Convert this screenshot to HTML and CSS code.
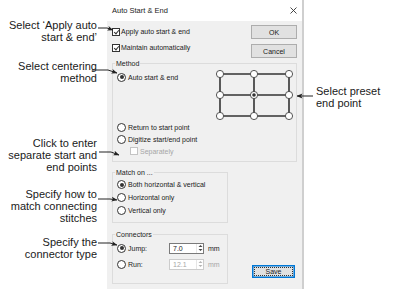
FILE: index.html
```html
<!DOCTYPE html>
<html lang="en">
<head>
    <meta charset="UTF-8">
    <meta name="viewport" content="width=device-width, initial-scale=1.0">
    <title>Auto Start &amp; End</title>
    <link rel="stylesheet" href="styles.css">
</head>
<body>
    <div class="figure">
        <div class="dialog">
            <div class="titlebar">
                <span class="title">Auto Start &amp; End</span>
                <svg class="close" width="7" height="7" viewBox="0 0 7 7">
                    <path d="M0.5 0.5 L6.5 6.5 M6.5 0.5 L0.5 6.5" stroke="#333" stroke-width="0.9"/>
                </svg>
            </div>

            <div class="body">
                <div class="top">
                    <div class="checks">
                        <div class="check"><span class="box checked"></span>Apply auto start &amp; end</div>
                        <div class="check"><span class="box checked"></span>Maintain automatically</div>
                    </div>
                    <div class="buttons">
                        <div class="btn">OK</div>
                        <div class="btn">Cancel</div>
                    </div>
                </div>

                <div class="group method">
                    <div class="group-title">Method</div>
                    <div class="method-top">
                        <div class="radio-row"><span class="radio on"></span>Auto start &amp; end</div>
                        <svg class="grid" width="80" height="52" viewBox="0 0 80 52">
                            <g stroke="#333" stroke-width="1.6">
                                <line x1="7" y1="5" x2="76" y2="5"/>
                                <line x1="7" y1="26" x2="76" y2="26"/>
                                <line x1="7" y1="47" x2="76" y2="47"/>
                                <line x1="7" y1="5" x2="7" y2="47"/>
                                <line x1="41" y1="5" x2="41" y2="47"/>
                                <line x1="76" y1="5" x2="76" y2="47"/>
                            </g>
                            <g fill="#fff" stroke="#444" stroke-width="0.9">
                                <circle cx="7" cy="5" r="3.6"/>
                                <circle cx="41" cy="5" r="3.6"/>
                                <circle cx="76" cy="5" r="3.6"/>
                                <circle cx="7" cy="26" r="3.6"/>
                                <circle cx="41" cy="26" r="3.6"/>
                                <circle cx="76" cy="26" r="3.6"/>
                                <circle cx="7" cy="47" r="3.6"/>
                                <circle cx="41" cy="47" r="3.6"/>
                                <circle cx="76" cy="47" r="3.6"/>
                            </g>
                            <circle cx="41" cy="26" r="1.8" fill="#333"/>
                        </svg>
                    </div>
                    <div class="radio-row"><span class="radio"></span>Return to start point</div>
                    <div class="radio-row"><span class="radio"></span>Digitize start/end point</div>
                    <div class="check sub disabled"><span class="box"></span>Separately</div>
                </div>

                <div class="bottom">
                    <div class="groups">
                        <div class="group match">
                            <div class="group-title">Match on ...</div>
                            <div class="match-rows">
                                <div class="radio-row tall"><span class="radio on"></span>Both horizontal &amp; vertical</div>
                                <div class="radio-row tall"><span class="radio"></span>Horizontal only</div>
                                <div class="radio-row tall"><span class="radio"></span>Vertical only</div>
                            </div>
                        </div>

                        <div class="group connectors">
                            <div class="group-title">Connectors</div>
                            <div class="conn-rows">
                                <div class="conn-row">
                                    <div class="radio-row conn-label"><span class="radio on"></span>Jump:</div>
                                    <div class="spin">
                                        <span class="spin-value">7.0</span>
                                        <span class="spin-arrows">
                                            <svg width="5" height="8" viewBox="0 0 5 8"><path d="M0.5 3 L2.5 1 L4.5 3 Z M0.5 5 L2.5 7 L4.5 5 Z" fill="#444"/></svg>
                                        </span>
                                    </div>
                                    <span class="unit">mm</span>
                                </div>
                                <div class="conn-row disabled">
                                    <div class="radio-row conn-label"><span class="radio"></span>Run:</div>
                                    <div class="spin">
                                        <span class="spin-value">12.1</span>
                                        <span class="spin-arrows">
                                            <svg width="5" height="8" viewBox="0 0 5 8"><path d="M0.5 3 L2.5 1 L4.5 3 Z M0.5 5 L2.5 7 L4.5 5 Z" fill="#b5b5b5"/></svg>
                                        </span>
                                    </div>
                                    <span class="unit">mm</span>
                                </div>
                            </div>
                        </div>
                    </div>
                    <div class="btn save">Save</div>
                </div>
            </div>
        </div>

        <!-- callouts -->
        <div class="callout left c-apply">Select ‘Apply auto<br>start &amp; end’</div>
        <div class="callout left c-method">Select centering<br>method</div>
        <div class="callout left c-click">Click to enter<br>separate start and<br>end points</div>
        <div class="callout left c-match">Specify how to<br>match connecting<br>stitches</div>
        <div class="callout left c-conn">Specify the<br>connector type</div>
        <div class="callout right c-preset">Select preset<br>end point</div>

        <svg class="leaders" width="399" height="289" viewBox="0 0 399 289">
            <defs>
                <marker id="ah" markerWidth="6" markerHeight="6" refX="5.5" refY="3" orient="auto" markerUnits="userSpaceOnUse">
                    <path d="M0 0.6 L6 3 L0 5.4 L1.4 3 Z" fill="#222"/>
                </marker>
            </defs>
            <g stroke="#222" stroke-width="1" fill="none" marker-end="url(#ah)">
                <polyline points="98,28 107,28 113,30"/>
                <polyline points="92,70 108,70 117,73"/>
                <polyline points="99,152 111,152 119,155"/>
                <polyline points="98,199 110,199 117,200"/>
                <polyline points="98,243 110,243 117,245"/>
                <polyline points="313,96 297,96"/>
            </g>
        </svg>
    </div>
</body>
</html>
```

FILE: styles.css
```css
body {
    margin: 0;
    background: #fff;
    font-family: "Liberation Sans", Arial, sans-serif;
}

.figure {
    position: relative;
    width: 399px;
    height: 289px;
    overflow: hidden;
}

/* dialog */

.dialog {
    margin-left: 107px;
    width: 195px;
    height: 289px;
    background: #f0f0f0;
    border-right: 2px solid #cfcfcf;
    font-size: 7px;
    color: #1a1a1a;
}

.titlebar {
    height: 21px;
    background: #fff;
    display: flex;
    align-items: center;
    justify-content: space-between;
    padding: 0 5px;
}

.title {
    font-size: 7.5px;
    color: #222;
}

.body {
    padding: 4px 5px 0;
}

.top {
    display: flex;
    justify-content: space-between;
}

.checks {
    display: flex;
    flex-direction: column;
    gap: 7px;
    padding-top: 2px;
}

.check {
    display: flex;
    align-items: center;
    gap: 1px;
    height: 9px;
    white-space: nowrap;
}

.box {
    width: 6px;
    height: 6px;
    border: 1px solid #333;
    background: #fff;
    position: relative;
}

.box.checked::after {
    content: "";
    position: absolute;
    left: 1.5px;
    top: 0;
    width: 2px;
    height: 4px;
    border: solid #333;
    border-width: 0 0.8px 0.8px 0;
    transform: rotate(40deg);
}

.check.sub {
    height: 12px;
    margin-left: 13px;
    gap: 2px;
}

.check.disabled {
    color: #a6a6a6;
}

.check.disabled .box {
    border-color: #c4c4c4;
}

.buttons {
    display: flex;
    flex-direction: column;
    gap: 5px;
}

.btn {
    width: 44px;
    height: 12px;
    border: 1px solid #adadad;
    background: #e1e1e1;
    display: flex;
    align-items: center;
    justify-content: center;
}

/* group boxes */

.group {
    border: 1px solid #dcdcdc;
    padding: 0 3px 4px 4px;
}

.group-title {
    margin: -5px 0 0 -2px;
    padding: 0 1px;
    height: 9px;
    line-height: 9px;
    width: fit-content;
    background: #f0f0f0;
}

.method {
    margin-top: 5px;
}

.method-top {
    display: flex;
    justify-content: space-between;
    align-items: flex-start;
    margin-top: 1px;
}

.method-top .radio-row {
    margin-top: 2px;
}

.grid {
    display: block;
}

.radio-row {
    display: flex;
    align-items: center;
    gap: 2px;
    height: 12px;
    white-space: nowrap;
}

.radio-row.tall {
    height: 13px;
}

.radio {
    width: 7px;
    height: 7px;
    border: 1px solid #333;
    border-radius: 50%;
    background: #fff;
    position: relative;
    flex: none;
}

.radio.on::after {
    content: "";
    position: absolute;
    left: 1.5px;
    top: 1.5px;
    width: 4px;
    height: 4px;
    border-radius: 50%;
    background: #333;
}

.bottom {
    display: flex;
    justify-content: space-between;
    align-items: flex-end;
    margin-top: 10px;
}

.groups {
    display: flex;
    flex-direction: column;
    gap: 11px;
    width: 116px;
}

.match-rows {
    margin-top: 1px;
    padding-bottom: 1px;
}

.connectors {
    padding-bottom: 13px;
}

.conn-rows {
    display: flex;
    flex-direction: column;
    gap: 4px;
    margin-top: 3px;
}

.conn-row {
    display: flex;
    align-items: center;
    height: 12px;
}

.conn-label {
    width: 52px;
}

.spin {
    width: 33px;
    height: 9px;
    border: 1px solid #7a7a7a;
    background: #fff;
    display: flex;
    align-items: center;
    justify-content: space-between;
}

.spin-value {
    padding-left: 3px;
}

.spin-arrows {
    width: 6px;
    height: 9px;
    display: flex;
    align-items: center;
    justify-content: center;
    border-left: 1px solid #e6e6e6;
}

.unit {
    margin-left: 4px;
}

.conn-row.disabled .spin {
    border-color: #cccccc;
    color: #a6a6a6;
}

.conn-row.disabled .unit {
    color: #a6a6a6;
}

.btn.save {
    width: 41px;
    height: 11px;
    border: 1px solid #0078d7;
    box-shadow: inset 0 0 0 0.5px #0078d7;
    outline: 1px dotted #333;
    outline-offset: -3px;
    margin: 0 2px 6px 0;
}

/* callouts */

.callout {
    position: absolute;
    font-size: 11px;
    line-height: 12px;
    color: #1a1a1a;
    white-space: nowrap;
}

.callout.left {
    right: 302px;
    text-align: right;
}

.callout.right {
    left: 316px;
}

.c-apply { top: 19px; }
.c-method { top: 60px; }
.c-click { top: 137px; }
.c-match { top: 188px; }
.c-conn { top: 236px; }
.c-preset { top: 85px; }

.leaders {
    position: absolute;
    left: 0;
    top: 0;
    pointer-events: none;
}
```
